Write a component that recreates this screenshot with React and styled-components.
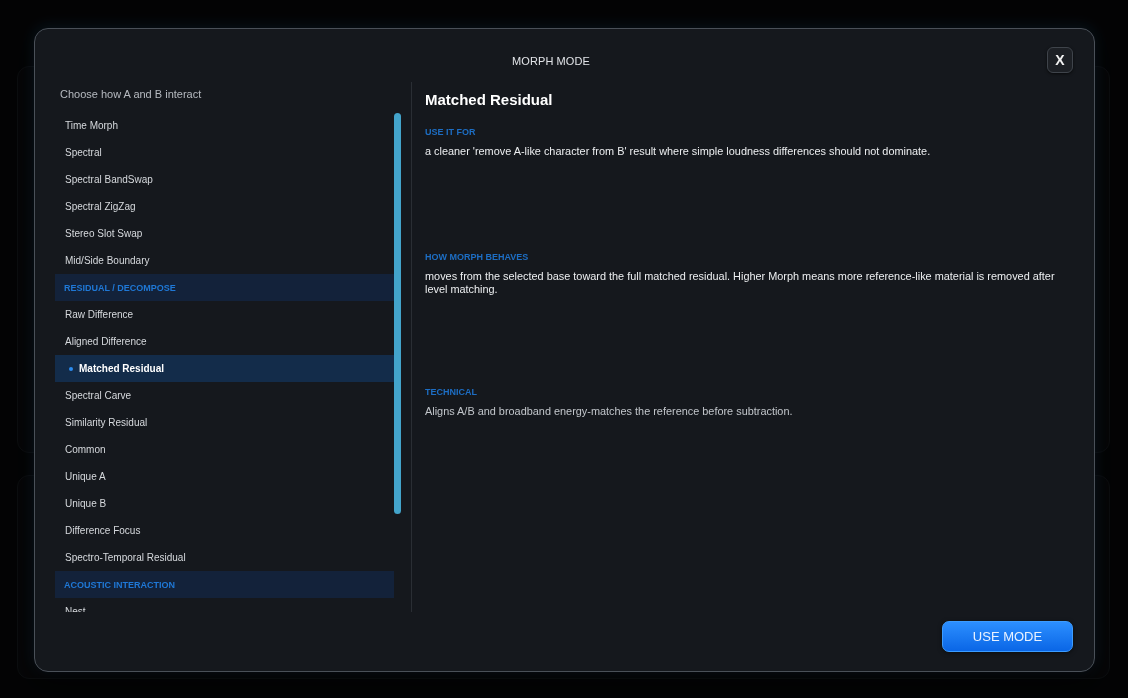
import styled, { createGlobalStyle } from "styled-components";

const GlobalStyle = createGlobalStyle`
    html, body {
        margin: 0;
        padding: 0;
        background: #050607;
        font-family: "Liberation Sans", Arial, sans-serif;
    }
    * { box-sizing: border-box; }
`;

const Page = styled.div`
    width: 1128px;
    height: 698px;
    padding: 66px 18px 19px 17px;
    display: flex;
    flex-direction: column;
    gap: 22px;
    overflow: hidden;
`;

const GhostPanel = styled.div`
    height: ${(p) => p.h}px;
    border: 1px solid #131619;
    border-radius: 12px;
    background: #090a0c;
`;

const Overlay = styled.div`
    position: fixed;
    inset: 0;
    background: rgba(0, 0, 0, 0.35);
    display: flex;
    align-items: flex-start;
    justify-content: flex-start;
    padding: 28px 0 0 34px;
`;

const Modal = styled.div`
    width: 1061px;
    height: 644px;
    background: #15181d;
    border: 1.5px solid #4a5058;
    border-radius: 14px;
    box-shadow: 0 -2px 14px rgba(40, 90, 140, 0.18), 0 10px 30px rgba(0, 0, 0, 0.6);
    display: flex;
    flex-direction: column;
`;

const Header = styled.div`
    height: 53px;
    padding: 18px 21px 9px 20px;
    display: flex;
    align-items: center;
`;

const Title = styled.div`
    flex: 1;
    text-align: center;
    padding-top: 2px;
    font-size: 11px;
    color: #e2e4e8;
    letter-spacing: 0.1px;
`;

const CloseButton = styled.button`
    width: 26px;
    height: 26px;
    border-radius: 6px;
    background: #1d2025;
    border: 1px solid #3f444b;
    color: #f2f2f2;
    font-family: "Liberation Sans", Arial, sans-serif;
    font-weight: bold;
    font-size: 14px;
    padding: 0;
    display: flex;
    align-items: center;
    justify-content: center;
    box-shadow: 0 1px 3px rgba(0, 0, 0, 0.6);
`;

const Body = styled.div`
    flex: 1;
    display: flex;
    padding: 0 21px 0 20px;
    min-height: 0;
`;

const LeftColumn = styled.div`
    width: 346px;
    display: flex;
    flex-direction: column;
`;

const Prompt = styled.div`
    font-size: 11px;
    color: #b6bac0;
    padding: 6px 0 0 5px;
    height: 30px;
`;

const ListArea = styled.div`
    height: 500px;
    display: flex;
`;

const List = styled.div`
    width: 339px;
    overflow: hidden;
`;

const ScrollTrack = styled.div`
    width: 7px;
    padding-top: 1px;
`;

const ScrollThumb = styled.div`
    height: 401px;
    border-radius: 4px;
    background: #43a4cb;
`;

const GroupHeader = styled.div`
    height: 27px;
    display: flex;
    align-items: center;
    padding-left: 9px;
    background: #13223a;
    color: #1f78d6;
    font-size: 9px;
    font-weight: bold;
`;

const Item = styled.div`
    height: 27px;
    display: flex;
    align-items: center;
    gap: 6px;
    padding-left: ${(p) => (p.active ? 14 : 10)}px;
    font-size: 10px;
    color: ${(p) => (p.active ? "#ffffff" : "#d6d9dd")};
    font-weight: ${(p) => (p.active ? "bold" : "normal")};
    background: ${(p) => (p.active ? "#132c4a" : "transparent")};
`;

const Dot = styled.span`
    width: 4px;
    height: 4px;
    border-radius: 50%;
    background: #2b8cf0;
`;

const Divider = styled.div`
    width: 1px;
    background: #2a2e34;
    margin-left: 10px;
`;

const Details = styled.div`
    flex: 1;
    padding: 9px 0 0 13px;
`;

const DetailTitle = styled.h2`
    margin: 0 0 19px;
    font-size: 15px;
    line-height: 17px;
    font-weight: bold;
    color: #ffffff;
`;

const Section = styled.div`
    margin-bottom: ${(p) => p.gap}px;
`;

const Label = styled.div`
    font-size: 9px;
    line-height: 10px;
    font-weight: bold;
    color: #1d6ec4;
    margin-bottom: 8px;
`;

const Text = styled.div`
    font-size: 10.9px;
    line-height: 13px;
    color: ${(p) => (p.dim ? "#c2c6cb" : "#eceef0")};
`;

const Footer = styled.div`
    height: 59px;
    display: flex;
    justify-content: flex-end;
    padding: 9px 21px 0;
`;

const UseButton = styled.button`
    width: 131px;
    height: 31px;
    border-radius: 7px;
    border: 1px solid #3c9cff;
    background: linear-gradient(#2c8fff, #0a66e6);
    color: #e9f2ff;
    font-family: "Liberation Sans", Arial, sans-serif;
    font-size: 13px;
    box-shadow: 0 1px 4px rgba(0, 0, 0, 0.5);
`;

const groups = [
    {
        items: ["Time Morph", "Spectral", "Spectral BandSwap", "Spectral ZigZag", "Stereo Slot Swap", "Mid/Side Boundary"],
    },
    {
        title: "RESIDUAL / DECOMPOSE",
        items: [
            "Raw Difference",
            "Aligned Difference",
            "Matched Residual",
            "Spectral Carve",
            "Similarity Residual",
            "Common",
            "Unique A",
            "Unique B",
            "Difference Focus",
            "Spectro-Temporal Residual",
        ],
    },
    {
        title: "ACOUSTIC INTERACTION",
        items: ["Nest"],
    },
];

const selected = "Matched Residual";

export default function App() {
    return (
        <>
            <GlobalStyle />
            <Page>
                <GhostPanel h={387} />
                <GhostPanel h={204} />
            </Page>
            <Overlay>
                <Modal>
                    <Header>
                        <Title>MORPH MODE</Title>
                        <CloseButton>X</CloseButton>
                    </Header>
                    <Body>
                        <LeftColumn>
                            <Prompt>Choose how A and B interact</Prompt>
                            <ListArea>
                                <List>
                                    {groups.map((g, i) => (
                                        <div key={i}>
                                            {g.title && <GroupHeader>{g.title}</GroupHeader>}
                                            {g.items.map((name) => (
                                                <Item key={name} active={name === selected}>
                                                    {name === selected && <Dot />}
                                                    {name}
                                                </Item>
                                            ))}
                                        </div>
                                    ))}
                                </List>
                                <ScrollTrack>
                                    <ScrollThumb />
                                </ScrollTrack>
                            </ListArea>
                        </LeftColumn>
                        <Divider />
                        <Details>
                            <DetailTitle>Matched Residual</DetailTitle>
                            <Section gap={94}>
                                <Label>USE IT FOR</Label>
                                <Text>a cleaner 'remove A-like character from B' result where simple loudness differences should not dominate.</Text>
                            </Section>
                            <Section gap={91}>
                                <Label>HOW MORPH BEHAVES</Label>
                                <Text>
                                    moves from the selected base toward the full matched residual. Higher Morph means more reference-like material is removed after level matching.
                                </Text>
                            </Section>
                            <Section gap={0}>
                                <Label>TECHNICAL</Label>
                                <Text dim>Aligns A/B and broadband energy-matches the reference before subtraction.</Text>
                            </Section>
                        </Details>
                    </Body>
                    <Footer>
                        <UseButton>USE MODE</UseButton>
                    </Footer>
                </Modal>
            </Overlay>
        </>
    );
}
